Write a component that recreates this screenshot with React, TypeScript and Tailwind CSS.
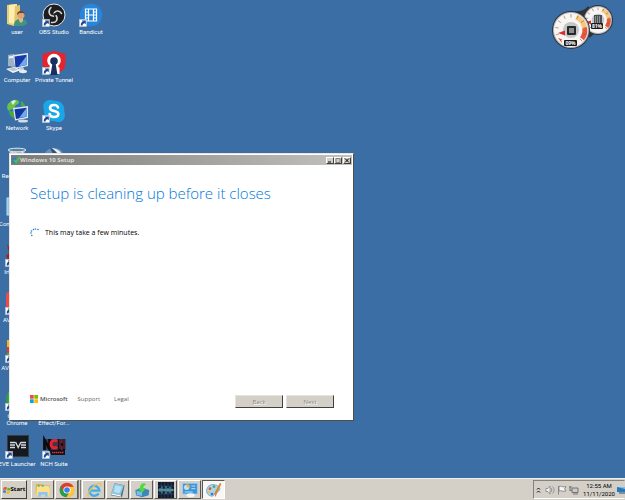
import type { ReactNode } from "react";

const UI_FONT = "font-['Open_Sans','Noto_Sans',sans-serif]";

function ShortcutArrow() {
  return (
    <g>
      <rect x="0.5" y="16.5" width="7" height="7" fill="#fff" stroke="#b9c6d6" strokeWidth="0.6" />
      <path d="M1.800 22.600c-.2-2.200.6-3.600 2-4.100l-1-1h4v3.800l-1.100-1c-1.400.1-2 .9-2.200 2.300z" fill="#1c4896" />
    </g>
  );
}

function UserIcon() {
  return (
    <>
      <path d="M2 2l8-1 2 1v20l-3 1-7-2z" fill="#e9cf72" />
      <path d="M4 2l8-1v20l-8-1z" fill="#fbeeb0" />
      <path d="M10 3l5-1v17l-6 4z" fill="#e3c668" />
      <path d="M9 23c0-6 3-7 7-7s6 1 6 5l-4 2z" fill="#3f9580" />
      <path d="M14 15h4v3l-2 2-2-2z" fill="#e8b58b" />
      <circle cx="16" cy="12" r="3.600" fill="#dba377" />
      <path d="M12 12c-.4-5.500 8-5.500 7.800 0l-1.500-2h-4z" fill="#6b4226" />
    </>
  );
}

function ObsIcon() {
  return (
    <>
      <circle cx="12" cy="12" r="11" fill="#1d1d20" stroke="#e4e6e8" strokeWidth="1" />
      <g fill="none" stroke="#d6d6d8" strokeWidth="1.500" strokeLinecap="round">
        <path d="M9 4.500C5.500 8 7 13 11.500 13.200" />
        <path d="M19.500 10.500C17 6.500 11.800 7.500 11.500 12.500" />
        <path d="M9.500 19.500c5 .8 7-3.500 4.500-7" />
      </g>
      <circle cx="12.300" cy="11.500" r="1.200" fill="#1d1d20" />
      <ShortcutArrow />
    </>
  );
}

function BandicutIcon() {
  return (
    <>
      <circle cx="12" cy="12" r="11.200" fill="#2786dc" />
      <g fill="none" stroke="#fff" strokeWidth="1.200">
        <path d="M6.500 6h11v12h-11zM9.500 6v12M14.500 6v12M9.500 12h5" />
        <path d="M6.500 9h3M6.500 12h3M6.500 15h3M14.500 9h3M14.500 12h3M14.500 15h3" />
      </g>
      <ShortcutArrow />
    </>
  );
}

function Monitor() {
  return (
    <>
      <path d="M8 4l15-2v13l-13 3z" fill="#dfe6ee" />
      <path d="M9.500 5.500l12-1.800V14l-11 2.500z" fill="#1539a8" />
      <path d="M14 15l7.500-10v9l-5 1z" fill="#6fa9f4" />
    </>
  );
}

function ComputerIcon() {
  return (
    <>
      <path d="M3 4l6-1v13l-6-1z" fill="#9fb2c5" />
      <path d="M4 5.500l4-.6v2l-4 .4z" fill="#f3f7fa" />
      <Monitor />
      <path d="M14 17l4-1 2 4h-6z" fill="#c4cfda" />
      <path d="M1 18l8-2 7 3-8 3z" fill="#f2f5f8" />
      <path d="M3 18l6-1.300 4 2-5 1.500z" fill="#b6c3d1" />
      <ellipse cx="18" cy="20.500" rx="4" ry="1.700" fill="#e7ecf1" />
    </>
  );
}

function NetworkIcon() {
  return (
    <>
      <circle cx="11" cy="10" r="9.500" fill="#2c73c9" />
      <path d="M4 4c4-5 10-3 10-1 0 3-4 2-4 5s-4 1-6 4C1 9 2 6 4 4z" fill="#6cc143" />
      <path d="M4 12c4-1 7 2 5 7-3-.6-5-4-5-7zM16 2c3 1 4 4 4 6l-4-1z" fill="#4da838" />
      <path d="M6 3c2-2 4-2 5-1L8 6z" fill="#d9f2e8" />
      <path d="M8 9l15-2v12L10 21.500z" fill="#dfe6ee" />
      <path d="M9.500 10.300l12-1.600v9L11 20z" fill="#1236a0" />
      <path d="M14 19l7.500-10v8.500z" fill="#6fa9f4" />
      <ellipse cx="18" cy="22" rx="5" ry="1.500" fill="#d3dce5" />
    </>
  );
}

function TunnelIcon() {
  return (
    <>
      <path d="M12 0l11.500 3v9c0 6-4 9-11.500 12C5 21 .5 18 .5 12V3z" fill="#e7232e" />
      <path d="M6.500 23v-6l1.500-2a6.800 6.800 0 1 1 8 0l1.500 2v6z" fill="#fff" />
      <circle cx="12" cy="10" r="3.800" fill="#17305f" />
      <path d="M10.500 12h3l2 12h-7z" fill="#17305f" />
      <ShortcutArrow />
    </>
  );
}

function SkypeIcon() {
  return (
    <>
      <path
        d="M7 1c2-.3 4 .4 5 .8C19 1.500 23 6 22.300 13 24 17 22 23 17 23c-2 0-3-.7-4-.8C6 22.500 1.500 18 2 11 0 7 2 1.500 7 1z"
        fill="#19a7ea"
      />
      <path
        d="M16 8.500C15.500 6.300 13.800 6 12 6c-2.400 0-4 1-4 3 0 4.200 8.300 2 8.300 6 0 2-1.800 3-4.300 3-2.400 0-4-.9-4.400-3"
        fill="none"
        stroke="#fff"
        strokeWidth="2.600"
        strokeLinecap="round"
      />
      <ShortcutArrow />
    </>
  );
}

function RecycleIcon() {
  return (
    <>
      <path d="M4 3l3 20h10l3-20z" fill="#9fbdd6" opacity="0.7" />
      <ellipse cx="12" cy="3" rx="9" ry="1.800" fill="#5d7f9e" stroke="#dce9f2" />
      <path d="M5 6l5-1 3 2 6-2" fill="none" stroke="#c8dbe9" />
    </>
  );
}

function DiscIcon() {
  return (
    <>
      <circle cx="12" cy="12" r="11" fill="#6f8fae" />
      <path d="M10 1c7 1 10 5 12 10l-6-1z" fill="#e6eef5" />
      <path d="M8 1c4 1 7 4 9 8l-4 2z" fill="#2c4e80" />
      <circle cx="12" cy="12" r="3" fill="#3b6ea5" />
    </>
  );
}

function ControlIcon() {
  return (
    <>
      <rect x="2" y="3" width="21" height="17" fill="#8fc4ee" stroke="#b9dcf6" />
      <circle cx="12" cy="11" r="5" fill="#f6fafd" />
    </>
  );
}

function IrfanIcon() {
  return (
    <>
      <path d="M2 1l3 4 3-3 5 3 7-2-3 7 3 8-8-3-8 3-3-5 3-3z" fill="#a41e22" />
      <circle cx="12" cy="9" r="4" fill="#2b1214" />
      <ShortcutArrow />
    </>
  );
}

function AvsIcon() {
  return (
    <>
      <rect x="1" y="1" width="22" height="20" rx="3" fill="#ec4b4b" />
      <path d="M9 6l8 5-8 5z" fill="#fff" />
      <ShortcutArrow />
    </>
  );
}

function AvgIcon() {
  return (
    <>
      <path d="M2 1h11v9H2z" fill="#f6b21b" />
      <path d="M12 1h11v9H12z" fill="#e53b2c" />
      <path d="M2 8h11v7H2z" fill="#dd3a2a" />
      <path d="M2 14h21v8H2z" fill="#4fa63b" />
      <ShortcutArrow />
    </>
  );
}

function ChromeMark() {
  return (
    <>
      <circle cx="12" cy="12" r="11" fill="#e33b2e" />
      <path d="M2.500 6.500A11 11 0 0 0 11 23l5-9-4-2-5 2z" fill="#22a04b" />
      <path d="M11 23A11 11 0 0 0 22 7H12l4.500 7z" fill="#fcc934" />
      <circle cx="12" cy="12" r="5.400" fill="#fff" />
      <circle cx="12" cy="12" r="4.200" fill="#3d7fe8" />
    </>
  );
}

function ChromeIcon() {
  return (
    <>
      <ChromeMark />
      <path d="M3 5h5v11H3z" fill="#22b14c" />
      <ShortcutArrow />
    </>
  );
}

function EveIcon() {
  return (
    <>
      <rect x="2" y="0" width="22" height="22" fill="#15191d" />
      <rect x="2.500" y="0.500" width="21" height="21" fill="none" stroke="#353b41" />
      <path
        d="M5 7.500h5M5 10h5M5 12.500h5M16 7.500h5M16 10h5M16 12.500h5"
        stroke="#d5d8da"
        strokeWidth="1.300"
      />
      <path d="M10.500 7l2.700 5.500L16 7" fill="none" stroke="#d5d8da" strokeWidth="1.400" />
      <ShortcutArrow />
    </>
  );
}

function NchIcon() {
  return (
    <>
      <rect x="1" y="4" width="22" height="11" fill="#3c3550" />
      <rect x="9" y="15" width="14" height="5" fill="#170f14" />
      <g fill="none" stroke="#0c0a0c" strokeWidth="2.600">
        <path d="M2.500 15V5l5 9V4" />
        <path d="M17.500 4v11M22 4v11M17.500 9.500H22" />
      </g>
      <path d="M15 6.500c-2-2-6-1-6 2.700s4 4.600 6 2.600" fill="none" stroke="#ee202b" strokeWidth="2.800" />
      <path d="M18 4v10M22 4v10" fill="none" stroke="#c91d28" strokeWidth="0.900" />
      <path d="M10 17.500h12" stroke="#d1333d" strokeWidth="1.600" strokeDasharray="1.500 .5" />
      <ShortcutArrow />
    </>
  );
}

type DesktopItem = { label: string; icon: ReactNode; col: string };

const desktopItems: DesktopItem[] = [
  { label: "user", icon: <UserIcon />, col: "col-start-1" },
  { label: "OBS Studio", icon: <ObsIcon />, col: "col-start-2" },
  { label: "Bandicut", icon: <BandicutIcon />, col: "col-start-3" },
  { label: "Computer", icon: <ComputerIcon />, col: "col-start-1" },
  { label: "Private Tunnel", icon: <TunnelIcon />, col: "col-start-2" },
  { label: "Network", icon: <NetworkIcon />, col: "col-start-1" },
  { label: "Skype", icon: <SkypeIcon />, col: "col-start-2" },
  { label: "Recycle Bin", icon: <RecycleIcon />, col: "col-start-1" },
  { label: "Disc", icon: <DiscIcon />, col: "col-start-2" },
  { label: "Control Panel", icon: <ControlIcon />, col: "col-start-1" },
  { label: "IrfanView", icon: <IrfanIcon />, col: "col-start-1" },
  { label: "AVS Editor", icon: <AvsIcon />, col: "col-start-1" },
  { label: "AVG Secure", icon: <AvgIcon />, col: "col-start-1" },
  { label: "Google Chrome", icon: <ChromeIcon />, col: "col-start-1" },
  { label: "Folder Effect/For...", icon: <DiscIcon />, col: "col-start-2" },
  { label: "EVE Launcher", icon: <EveIcon />, col: "col-start-1" },
  { label: "NCH Suite", icon: <NchIcon />, col: "col-start-2" },
];

// these labels wrap onto a second line
const wrapped = ["Google Chrome", "Folder Effect/For..."];

function DesktopIcon({ label, icon, col }: DesktopItem) {
  return (
    <button type="button" className={`flex flex-col items-center h-10 min-w-0 ${col}`}>
      <svg viewBox="0 0 24 24" className="size-6 shrink-0" aria-hidden="true">
        {icon}
      </svg>
      <span
        className={`text-[6px] leading-[7px] mt-px text-white font-[Roboto,sans-serif] ${
          wrapped.includes(label) ? "w-8" : "whitespace-nowrap"
        }`}
      >
        {label}
      </span>
    </button>
  );
}

function Gauge({ cx, cy, r }: { cx: number; cy: number; r: number }) {
  const ticks = Array.from({ length: 11 }, (_, i) => ((135 + i * 27) * Math.PI) / 180);
  return (
    <g>
      <circle cx={cx} cy={cy} r={r} fill="#2f3338" />
      <circle cx={cx} cy={cy} r={r - 1} fill="#b4b8bc" />
      <circle cx={cx} cy={cy} r={r - 2} fill="#f8f5f2" />
      <path
        d={`M${cx + r * 0.28} ${cy - r * 0.67}A${r * 0.73} ${r * 0.73} 0 0 1 ${cx + r * 0.72} ${cy - r * 0.1}`}
        fill="none" stroke="#f7c77a" strokeWidth={r * 0.26}
      />
      <path
        d={`M${cx + r * 0.72} ${cy - r * 0.1}A${r * 0.73} ${r * 0.73} 0 0 1 ${cx + r * 0.58} ${cy + r * 0.46}`}
        fill="none" stroke="#e9573a" strokeWidth={r * 0.26}
      />
      {ticks.map((a) => (
        <line
          key={a}
          x1={cx + Math.cos(a) * r * 0.66}
          y1={cy + Math.sin(a) * r * 0.66}
          x2={cx + Math.cos(a) * r * 0.84}
          y2={cy + Math.sin(a) * r * 0.84}
          stroke="#8d5a50"
          strokeWidth="0.6"
        />
      ))}
      <circle cx={cx} cy={cy} r={r * 0.42} fill="#c3c7ca" />
    </g>
  );
}

function CpuMeter() {
  return (
    <svg viewBox="0 0 62 48" className="absolute top-[3px] right-[11px] w-[62px] h-12" aria-label="CPU meter">
      <path d="M22 8C30 9 34 6 36 3l18 22c-8 5-14 6-16 10z" fill="#2f3338" />
      <Gauge cx={46} cy={17} r={15} />
      <path d="M42 12h8v9h-8z" fill="#4b4f54" />
      <path d="M43.500 13v8M45.500 13v8M47.500 13v8" stroke="#b6babd" strokeWidth="0.600" />
      <path d="M34 19l5-1.500v4z" fill="#d92f2f" />
      <rect x="39" y="20" width="12" height="6" rx="1" fill="#17191b" />
      <text x="45" y="25" fontSize="5" fontWeight="bold" textAnchor="middle" fill="#fff">81%</text>
      <Gauge cx={19} cy={27} r={19} />
      <rect x="15" y="23" width="9" height="9" rx="1" fill="#26292c" />
      <rect x="17" y="25" width="5" height="5" fill="#8f8d84" />
      <path d="M6 30l7-2.500v5z" fill="#d92f2f" />
      <path d="M6 35l3 1 1 4z" fill="#e34b3c" />
      <rect x="12" y="37" width="13" height="6" rx="1" fill="#17191b" />
      <text x="18.500" y="42" fontSize="5" fontWeight="bold" textAnchor="middle" fill="#fff">09%</text>
    </svg>
  );
}

function CaptionButton({ label, children }: { label: string; children: ReactNode }) {
  return (
    <button
      type="button"
      aria-label={label}
      className="w-2 h-[7px] bg-[#d4d0c8] border border-t-white border-l-white border-r-[#404040] border-b-[#404040] flex items-center justify-center"
    >
      <svg viewBox="0 0 6 5" className="w-1.5 h-[5px] shrink-0" fill="none" stroke="currentColor">
        {children}
      </svg>
    </button>
  );
}

function SetupButton({ children }: { children: ReactNode }) {
  return (
    <button
      type="button"
      disabled
      className="w-12 h-[13px] bg-[#d4d0c8] border border-t-[#e6e3dd] border-l-[#e6e3dd] border-r-[#404040] border-b-[#404040] text-[6px] leading-[10px] text-[#898782] [text-shadow:1px_1px_0_#fff]"
    >
      {children}
    </button>
  );
}

function SetupWindow() {
  return (
    <section className="absolute left-[9px] top-[153px] w-[345px] h-[268px] flex flex-col bg-white border border-t-[#e8e5df] border-l-[#e8e5df] border-r-[#504e4a] border-b-[#504e4a]">
      <header className="h-2.5 m-px mb-0 shrink-0 flex items-center pl-px pr-px bg-linear-to-r from-[#7b7b79] to-[#c4c2be]">
        <svg viewBox="0 0 8 8" className="size-2" aria-hidden="true">
          <path d="M0 2l4-1v6H0z" fill="#3e7eae" />
          <path d="M2 4l2 2 4-5" fill="none" stroke="#28d160" strokeWidth="1.600" />
        </svg>
        <span className="flex-1 text-[6px] leading-[8px] font-bold text-[#dedbd4]">Windows 10 Setup</span>
        <CaptionButton label="Minimize"><path d="M1 4h3" /></CaptionButton>
        <CaptionButton label="Maximize"><path d="M1 .5h4v4H1z" stroke="#85827b" /></CaptionButton>
        <span className="w-px" />
        <CaptionButton label="Close"><path d="M1 .5l4 4M5 .5l-4 4" /></CaptionButton>
      </header>

      <div className="flex-1 flex flex-col pl-5 pr-[19px] pt-[18px] pb-3">
        <h1 className="text-[15px] leading-5 font-light text-[#0078d7]">Setup is cleaning up before it closes</h1>
        <div className="flex items-center gap-[5px] mt-[25px]">
          <svg viewBox="0 0 10 10" className="size-2.5" fill="#2479cd" aria-hidden="true">
            <circle cx="1" cy="5" r="0.800" />
            <circle cx="1.500" cy="3" r="0.800" />
            <circle cx="3.500" cy="1.500" r="0.800" />
            <circle cx="5.500" cy="1" r="0.800" />
            <circle cx="8" cy="1.500" r="0.800" />
            <circle cx="1.800" cy="7.500" r="0.800" />
          </svg>
          <p className="text-[7px] leading-[10px] text-black">This may take a few minutes.</p>
        </div>

        <footer className="mt-auto flex items-start text-[6px] leading-[8px] text-[#666]">
          <svg viewBox="0 0 8 8" className="size-2" aria-hidden="true">
            <path d="M0 0h3.700v3.700H0z" fill="#f25022" />
            <path d="M4.300 0H8v3.700H4.300z" fill="#7fba00" />
            <path d="M0 4.300h3.700V8H0z" fill="#00a4ef" />
            <path d="M4.300 4.300H8V8H4.300z" fill="#ffb900" />
          </svg>
          <span className="ml-0.5 font-semibold text-[#505050]">Microsoft</span>
          <a href="#support" className="ml-2.5">Support</a>
          <a href="#legal" className="ml-3.5">Legal</a>
          <div className="ml-auto flex gap-[3px]">
            <SetupButton>Back</SetupButton>
            <SetupButton>Next</SetupButton>
          </div>
        </footer>
      </div>
    </section>
  );
}

function TaskButton({ label, active, stacked, children }: { label: string; active?: boolean; stacked?: boolean; children: ReactNode }) {
  const edges = active
    ? "bg-[#f8f7f5] border-t-[#5b5955] border-l-[#5b5955] border-r-white border-b-white"
    : "bg-[#d4d0c8] border-t-white border-l-white border-r-[#5b5955] border-b-[#5b5955]";
  return (
    <>
      <button type="button" aria-label={label} className={`w-[23px] h-[19px] border flex items-center justify-center ${edges}`}>
        <svg viewBox="0 0 24 24" className="size-4 shrink-0">{children}</svg>
      </button>
      {stacked && <span className="w-[3px] h-[19px] -ml-px border-x border-[#7b7974]" />}
    </>
  );
}

function Taskbar() {
  return (
    <footer className="h-[22px] shrink-0 flex items-center pl-px bg-[#d4d0c8] border-t border-[#f1efeb]">
      <button
        type="button"
        className="w-[26px] h-[19px] mr-1 flex items-center justify-center border bg-[#d4d0c8] border-t-white border-l-white border-r-[#404040] border-b-[#404040] text-[6px] font-bold text-black"
      >
        <svg viewBox="0 0 10 10" className="size-2" aria-hidden="true">
          <path d="M1 2c1-1 3-1 4 0l-1 3c-1-1-2-1-4 0z" fill="#e5522b" />
          <path d="M6 2c1 1 3 1 4 0L9 5c-1 1-3 1-4 0z" fill="#6cae32" />
          <path d="M0 6c1-1 3-1 4 0L3 9C2 8 0 8-1 9z" fill="#3383d5" />
          <path d="M5 6c1 1 3 1 4 0L8 9c-1 1-3 1-4 0z" fill="#f4b91e" />
        </svg>
        Start
      </button>
      <nav className="flex gap-px">
        <TaskButton label="Explorer">
          <path d="M1 3h8l2 2h11v14H1z" fill="#e2b94c" />
          <path d="M3 6h17l2 3v11H2z" fill="#fbe28a" />
          <path d="M4 4h3v3H4zM10 4h3v3h-3z" fill="#64b27e" />
          <path d="M5 22v-7h14v7h-4v-3H9v3z" fill="#8cc7ef" />
        </TaskButton>
        <TaskButton label="Chrome" stacked><ChromeMark /></TaskButton>
        <TaskButton label="Internet Explorer">
          <path d="M19 17a7.500 7.500 0 1 1 1-4H7" fill="none" stroke="#42aee9" strokeWidth="3.600" />
          <path d="M4 22C-2 20 13 1 21 2c2 1 1 3 0 5" fill="none" stroke="#efc14a" strokeWidth="1.800" />
        </TaskButton>
        <TaskButton label="Notepad">
          <path d="M7 2l15 3-4 18-17-3z" fill="#4b7180" />
          <path d="M7 2l14 3-5 15-14-3z" fill="#8cc6e2" />
          <path d="M8 5l10 2-4 10-8-2z" fill="#b8e1f2" />
          <path d="M2 17l14 3 1 2-15-3z" fill="#f5f8fa" />
        </TaskButton>
        <TaskButton label="Downloader">
          <path d="M2 12l10-3 11 3-1 8-10 3-9-3z" fill="#3d87b7" />
          <path d="M4 13l8 2v6l-8-2z" fill="#7bbfe4" />
          <path d="M16 2c-5 0-7 3-7 7H6l6 7 6-7h-4c0-3 1-4 4-5z" fill="#4bdb41" />
        </TaskButton>
        <TaskButton label="Audio Editor">
          <path d="M0 0h24v24H0z" fill="#111b30" />
          <path d="M5 0v24M10 0v24M15 0v24M20 0v24M0 6h24M0 18h24" stroke="#344768" strokeWidth="1" />
          <path d="M0 12h24M3 9v6M6 7v10M9 10v4M12 6v12M15 9v6M18 7v10M21 10v4" stroke="#5db4ba" strokeWidth="1.500" />
        </TaskButton>
        <TaskButton label="Control Panel">
          <path d="M1 2h22v16H1z" fill="#3d94d7" stroke="#a6d3ef" />
          <circle cx="7" cy="8" r="4" fill="#bde5f8" />
          <path d="M7 8V3a5 5 0 0 1 5 5z" fill="#f3a932" />
          <path d="M14 6h6M14 10h6M4 15h12" stroke="#e1f2fb" strokeWidth="1.200" />
          <ellipse cx="13" cy="20" rx="6" ry="3" fill="#f4f5f5" />
        </TaskButton>
        <TaskButton label="Paint" active>
          <path d="M12 4C4 3 0 9 1 15c1 5 8 8 11 5 2-2 0-5 3-5 8 0 8-10-3-11z" fill="#a7d4ef" stroke="#5c96ba" />
          <circle cx="6" cy="10" r="2" fill="#e34c3a" />
          <circle cx="12" cy="7" r="2" fill="#56ae48" />
          <circle cx="5" cy="15" r="2" fill="#f1c63b" />
          <circle cx="9" cy="18" r="2" fill="#456dca" />
          <path d="M21 1l2 2-6 13-3 7-1-7z" fill="#d88636" />
        </TaskButton>
      </nav>

      <div className="ml-auto h-[19px] flex items-center gap-0.5 pl-0.5 border border-t-[#85827b] border-l-[#85827b] border-r-transparent border-b-white">
        <svg viewBox="0 0 5 8" className="w-[5px] h-2 mr-0.5" fill="none" stroke="#111" aria-label="Show hidden icons">
          <path d="M1 3.500L2.500 2 4 3.500M1 6.500L2.500 5 4 6.500" />
        </svg>
        <svg viewBox="0 0 10 10" className="size-2.5" aria-label="Volume">
          <path d="M1 3.500h2L5 1v8L3 6.500H1z" fill="#f6f6f6" stroke="#777" strokeWidth="0.700" />
          <path d="M6 3c1 1 1 3 0 4M7.500 1.500c2 2 2 5 0 7" fill="none" stroke="#888" strokeWidth="0.800" />
        </svg>
        <svg viewBox="0 0 10 10" className="size-2.5" aria-label="Action Center">
          <path d="M1.500 1v8.500M2 1.500c2-1 3 1 7 .2L7.500 4 9 6C6 7 4 5 2 6z" fill="#f7f7f7" stroke="#777" strokeWidth="0.800" />
        </svg>
        <svg viewBox="0 0 10 10" className="size-2.5" aria-label="Network">
          <path d="M3 3h6v4.500H3z" fill="#c8cbcb" stroke="#666" strokeWidth="0.900" />
          <path d="M1 1v4.500h2M0 2h3M4 9h5" fill="none" stroke="#777" strokeWidth="1.100" />
        </svg>
        <time className="ml-0.5 text-[6px] leading-[8px] text-center text-black whitespace-nowrap font-[Roboto,sans-serif]">
          12:55 AM
          <br />
          11/11/2020
        </time>
        <button type="button" aria-label="Show desktop" className="-mr-px">
          <svg viewBox="0 0 8 8" className="size-2">
            <path d="M0 1h8v5H0z" fill="#2878bd" />
            <path d="M0 1l8 2V1z" fill="#83bce8" />
            <path d="M2 7h6" stroke="#284d70" />
          </svg>
        </button>
      </div>
    </footer>
  );
}

export default function App() {
  return (
    <div className={`min-h-screen flex flex-col bg-[#3b6ea5] ${UI_FONT}`}>
      <main className="relative flex-1 overflow-hidden">
        <div className="grid grid-cols-[repeat(3,34px)] auto-rows-[40px] gap-x-[3px] gap-y-2 pt-[3px]">
          {desktopItems.map((item) => (
            <DesktopIcon key={item.label} {...item} />
          ))}
        </div>
        <SetupWindow />
        <CpuMeter />
      </main>
      <Taskbar />
    </div>
  );
}
